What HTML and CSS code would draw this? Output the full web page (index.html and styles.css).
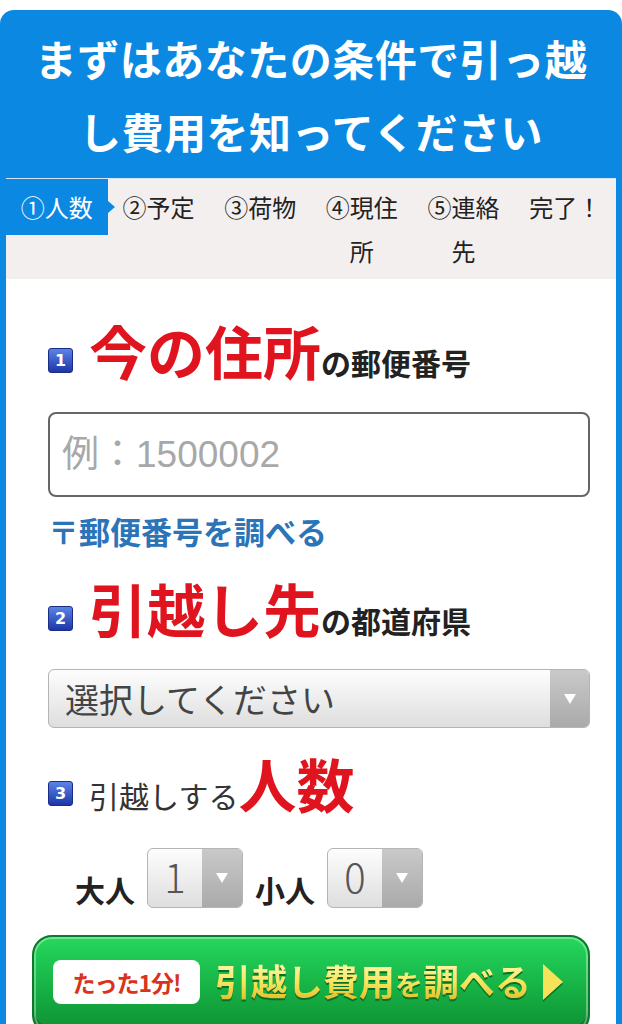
FILE: index.html
```html
<!DOCTYPE html>
<html lang="ja">
<head>
  <meta charset="UTF-8">
  <meta name="viewport" content="width=device-width, initial-scale=1.0">
  <title>引越し費用見積もり</title>
  <link rel="stylesheet" href="styles.css">
</head>
<body>
  <div class="estimate">
    <h1 class="estimate__title">まずはあなたの条件で引っ越し費用を知ってください</h1>

    <ol class="steps">
      <li class="steps__item steps__item--active">①人数</li>
      <li class="steps__item">②予定</li>
      <li class="steps__item">③荷物</li>
      <li class="steps__item">④現住所</li>
      <li class="steps__item">⑤連絡先</li>
      <li class="steps__item">完了！</li>
    </ol>

    <div class="estimate__body">
      <div class="question">
        <span class="question__num">1</span>
        <span class="question__text"><em>今の住所</em>の郵便番号</span>
      </div>
      <input class="zip" type="text" placeholder="例：1500002">
      <a href="#" class="zip-link">〒郵便番号を調べる</a>

      <div class="question question--second">
        <span class="question__num">2</span>
        <span class="question__text"><em>引越し先</em>の都道府県</span>
      </div>
      <div class="select select--wide">
        <span class="select__value">選択してください</span>
        <span class="select__arrow"></span>
      </div>

      <div class="question question--third">
        <span class="question__num">3</span>
        <span class="question__text question__text--plain">引越しする<em>人数</em></span>
      </div>
      <div class="people">
        <span class="people__label">大人</span>
        <div class="select select--small">
          <span class="select__value">1</span>
          <span class="select__arrow"></span>
        </div>
        <span class="people__label">小人</span>
        <div class="select select--small">
          <span class="select__value">0</span>
          <span class="select__arrow"></span>
        </div>
      </div>

      <button class="submit">
        <span class="submit__badge">たった1分!</span>
        <span class="submit__label">引越し費用<small>を</small>調べる</span>
        <span class="submit__arrow"></span>
      </button>
    </div>
  </div>
</body>
</html>
```

FILE: styles.css
```css
* {
  box-sizing: border-box;
  margin: 0;
  padding: 0;
}

body {
  font-family: "Noto Sans CJK JP", "Noto Sans", sans-serif;
  background-color: #fff;
  color: #222;
  overflow: hidden;
}

.estimate {
  margin-top: 10px;
  border: 6px solid #0a88e2;
  border-bottom: none;
  border-radius: 14px 14px 0 0;
  background-color: #fff;
  height: 1014px;
}

.estimate__title {
  background-color: #0a88e2;
  color: #fff;
  font-size: 42px;
  font-weight: 700;
  line-height: 73px;
  text-align: center;
  padding: 5px 20px 11px;
  letter-spacing: 0.5px;
}

.steps {
  list-style: none;
  display: grid;
  grid-template-columns: repeat(6, 1fr);
  background-color: #f4efef;
  border-top: 1px solid #d3e6f5;
}

.steps__item {
  align-self: start;
  position: relative;
  font-size: 24px;
  line-height: 44px;
  padding: 6px 10px;
  text-align: center;
  color: #222;
}

.steps__item--active {
  background-color: #0a88e2;
  color: #fff;
}

.steps__item--active::after {
  content: "";
  position: absolute;
  top: 22px;
  right: -7px;
  border-top: 6px solid transparent;
  border-bottom: 6px solid transparent;
  border-left: 7px solid #0a88e2;
}

.estimate__body {
  padding: 45px 26px 0 42px;
}

.question {
  display: flex;
  align-items: center;
  height: 64px;
}

.question--second {
  margin-top: 31px;
}

.question--third {
  margin-top: 29px;
}

.question__num {
  width: 25px;
  height: 25px;
  margin-top: 8px;
  border-radius: 3px;
  border: 1px solid #1a2c86;
  background: linear-gradient(#5b84e6, #1d36a8);
  color: #fff;
  font-size: 16px;
  font-weight: 700;
  line-height: 23px;
  text-align: center;
  font-family: "DejaVu Sans", sans-serif;
}

.question__text {
  margin-left: 16px;
  font-size: 30px;
  font-weight: 700;
  line-height: 64px;
  color: #222;
}

.question__text--plain {
  font-weight: 400;
  color: #333;
}

.question__text em {
  font-style: normal;
  font-weight: 700;
  font-size: 58px;
  color: #e0141e;
}

.zip {
  display: block;
  width: 100%;
  height: 85px;
  margin-top: 24px;
  border: 2px solid #666;
  border-radius: 8px;
  padding: 0 12px;
  font-family: "Liberation Sans", "Noto Sans CJK JP", sans-serif;
  font-size: 37px;
  font-weight: 400;
  outline: none;
}

.zip::placeholder {
  color: #a8a8a8;
}

.zip-link {
  display: block;
  margin-top: 14px;
  font-size: 31px;
  font-weight: 700;
  line-height: 40px;
  color: #2c74b8;
  text-decoration: none;
}

.select {
  display: flex;
  border: 1px solid #b4b4b4;
  border-radius: 6px;
  overflow: hidden;
  background: linear-gradient(#fdfdfd, #dedede);
}

.select--wide {
  margin-top: 23px;
  height: 59px;
}

.select__value {
  flex: 1;
  color: #444;
  font-size: 34px;
  line-height: 57px;
  padding-left: 16px;
}

.select__arrow {
  position: relative;
  width: 39px;
  background: linear-gradient(#c9c9c9, #aaa);
}

.select__arrow::after {
  content: "";
  position: absolute;
  top: 50%;
  left: 50%;
  margin: -5px 0 0 -6px;
  border-left: 6px solid transparent;
  border-right: 6px solid transparent;
  border-top: 10px solid #fff;
}

.people {
  display: flex;
  align-items: center;
  gap: 12px;
  margin-top: 24px;
  padding-left: 27px;
}

.people__label {
  font-size: 30px;
  font-weight: 700;
  color: #222;
  padding-top: 22px;
}

.select--small {
  width: 96px;
  height: 60px;
}

.select--small .select__value {
  font-size: 40px;
  line-height: 54px;
  font-weight: 300;
  color: #555;
  text-align: center;
  padding-left: 0;
}

.select--small .select__arrow {
  width: 40px;
}

.submit {
  display: flex;
  align-items: center;
  width: calc(100% + 16px);
  height: 100px;
  margin: 24px 0 0 -16px;
  padding: 0 0 6px 19px;
  border: 2px solid #0b7a2a;
  border-radius: 20px;
  background: linear-gradient(#25d85d, #16b044 55%, #0e8f33);
  box-shadow: inset 0 0 0 2px rgba(255, 255, 255, 0.35), inset 0 -6px 0 #0b7a2c;
  font-family: "Noto Sans CJK JP", sans-serif;
  cursor: pointer;
}

.submit__badge {
  width: 147px;
  height: 44px;
  background-color: #fff;
  border-radius: 8px;
  color: #d9331b;
  font-size: 23px;
  font-weight: 700;
  line-height: 44px;
  text-align: center;
  letter-spacing: -1px;
}

.submit__label {
  margin-left: 15px;
  font-size: 36px;
  font-weight: 700;
  line-height: 44px;
  background: linear-gradient(#fffbc0, #f7e660 50%, #d9b316);
  -webkit-background-clip: text;
  background-clip: text;
  color: transparent;
  filter: drop-shadow(0 2px 0 #0a6d28);
}

.submit__label small {
  font-size: 28px;
}

.submit__arrow {
  margin-left: 12px;
  border-top: 18px solid transparent;
  border-bottom: 18px solid transparent;
  border-left: 20px solid #f7e35a;
  filter: drop-shadow(0 2px 0 #0a6d28);
}
```
